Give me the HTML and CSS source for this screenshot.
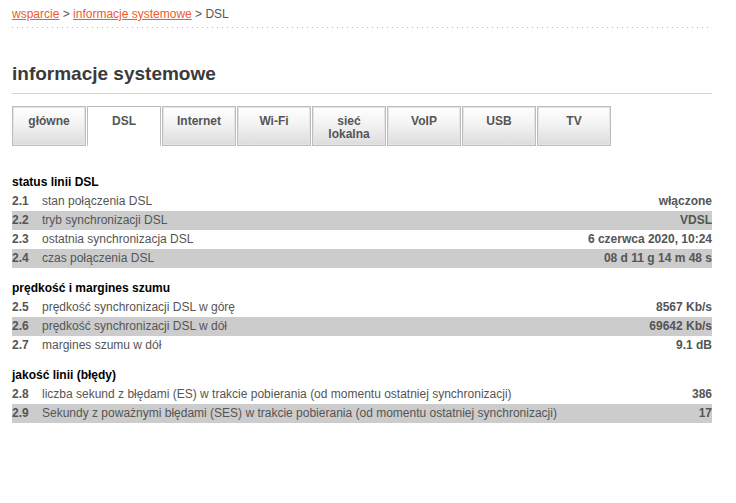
FILE: index.html
```html
<!DOCTYPE html>
<html lang="pl">
<head>
<meta charset="utf-8">
<title>informacje systemowe - DSL</title>
<link rel="stylesheet" href="styles.css">
</head>
<body>
<div class="page">
  <div class="crumbs"><a href="#">wsparcie</a> &gt; <a href="#">informacje systemowe</a> &gt; DSL</div>
  <div class="dots"></div>
  <h1 class="title">informacje systemowe</h1>
  <ul class="tabs">
    <li class="tab">główne</li>
    <li class="tab active">DSL</li>
    <li class="tab">Internet</li>
    <li class="tab">Wi-Fi</li>
    <li class="tab">sieć<br>lokalna</li>
    <li class="tab">VoIP</li>
    <li class="tab">USB</li>
    <li class="tab">TV</li>
  </ul>

  <div class="section">
    <h2 class="sec-title">status linii DSL</h2>
    <div class="row"><span class="num">2.1</span><span class="label">stan połączenia DSL</span><span class="val">włączone</span></div>
    <div class="row alt"><span class="num">2.2</span><span class="label">tryb synchronizacji DSL</span><span class="val">VDSL</span></div>
    <div class="row"><span class="num">2.3</span><span class="label">ostatnia synchronizacja DSL</span><span class="val">6 czerwca 2020, 10:24</span></div>
    <div class="row alt"><span class="num">2.4</span><span class="label">czas połączenia DSL</span><span class="val">08 d 11 g 14 m 48 s</span></div>
  </div>

  <div class="section">
    <h2 class="sec-title">prędkość i margines szumu</h2>
    <div class="row"><span class="num">2.5</span><span class="label">prędkość synchronizacji DSL w górę</span><span class="val">8567 Kb/s</span></div>
    <div class="row alt"><span class="num">2.6</span><span class="label">prędkość synchronizacji DSL w dół</span><span class="val">69642 Kb/s</span></div>
    <div class="row"><span class="num">2.7</span><span class="label">margines szumu w dół</span><span class="val">9.1 dB</span></div>
  </div>

  <div class="section">
    <h2 class="sec-title">jakość linii (błędy)</h2>
    <div class="row"><span class="num">2.8</span><span class="label">liczba sekund z błędami (ES) w trakcie pobierania (od momentu ostatniej synchronizacji)</span><span class="val">386</span></div>
    <div class="row alt"><span class="num">2.9</span><span class="label">Sekundy z poważnymi błędami (SES) w trakcie pobierania (od momentu ostatniej synchronizacji)</span><span class="val">17</span></div>
  </div>
</div>
</body>
</html>
```

FILE: styles.css
```css
html, body {
  margin: 0;
  padding: 0;
  background: #fff;
}

body {
  font-family: "Liberation Sans", Arial, sans-serif;
  font-size: 12px;
  color: #555;
}

.page {
  width: 700px;
  padding: 7px 12px 0;
}

.crumbs {
  font-size: 12px;
  line-height: 15px;
  color: #555;
}

.crumbs a {
  color: #f0592a;
  text-decoration: underline;
}

.dots {
  margin-top: 5px;
  height: 1px;
  background-image: linear-gradient(to right, #f2a47a 1px, transparent 1px);
  background-size: 5px 1px;
  background-repeat: repeat-x;
}

.title {
  margin: 35px 0 0;
  padding-bottom: 8px;
  border-bottom: 1px solid #d2d2d2;
  font-size: 19px;
  line-height: 22px;
  font-weight: bold;
  color: #3a3a3a;
}

.tabs {
  display: flex;
  gap: 1px;
  list-style: none;
  margin: 12px 0 16px;
  padding: 0;
}

.tab {
  box-sizing: border-box;
  width: 74px;
  height: 40px;
  padding-top: 8px;
  border: 1px solid #bdbdbd;
  box-shadow: inset 0 0 0 1px #e4e4e4;
  background: linear-gradient(to bottom, #ffffff 0%, #f3f3f3 45%, #dcdcdc 100%);
  text-align: center;
  font-weight: bold;
  font-size: 12px;
  line-height: 13px;
  color: #555;
}

.tab.active {
  background: #fff;
  border-bottom-color: #fff;
  box-shadow: none;
}

.section {
  padding-top: 11px;
}

.sec-title {
  margin: 0;
  font-size: 12px;
  line-height: 19px;
  font-weight: bold;
  color: #000;
}

.row {
  display: flex;
  height: 19px;
  line-height: 19px;
  color: #555;
}

.row.alt {
  background: #cccccc;
}

.num {
  width: 30px;
  flex: none;
  font-weight: bold;
  font-size: 12px;
}

.label {
  flex: 1;
  white-space: nowrap;
}

.val {
  font-weight: bold;
  text-align: right;
  white-space: nowrap;
}
```
